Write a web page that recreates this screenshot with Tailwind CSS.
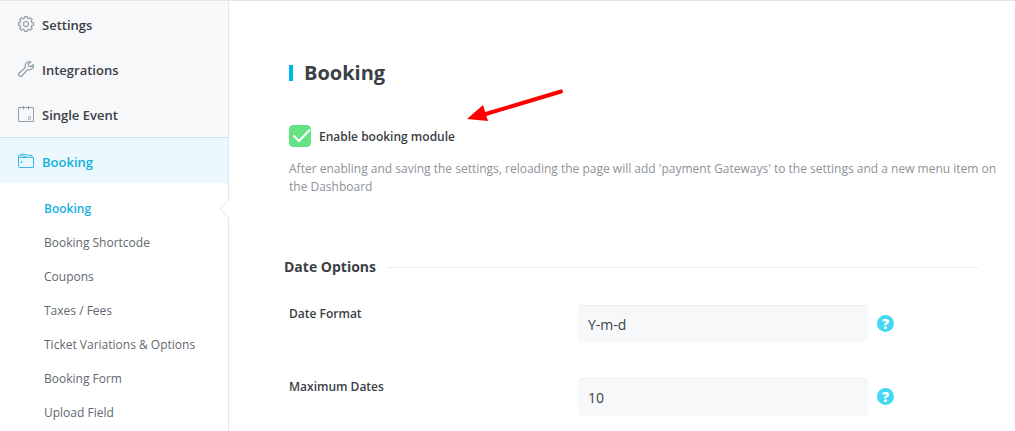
<!DOCTYPE html>
<html lang="en">
<head>
    <meta charset="UTF-8">
    <meta name="viewport" content="width=device-width, initial-scale=1.0">
    <title>Booking Settings</title>
    <script src="https://cdn.jsdelivr.net/npm/@tailwindcss/browser@4"></script>
</head>
<body class="bg-white font-['Open_Sans','Noto_Sans',sans-serif] text-[13px] text-[#3b4046]">
    <div class="flex min-h-screen border-t border-[#e3e5e9]">

        <!-- Sidebar -->
        <nav class="relative w-[229px] shrink-0 border-r border-[#e3e5e9]">
            <div class="bg-[#f7f8fa] leading-5 font-semibold">
                <a href="#" class="flex h-[45px] items-center gap-2 px-[18px] pt-px">
                    <svg class="size-4" viewBox="0 0 16 16" fill="none" stroke="#949eaa" stroke-width="1.200" stroke-linejoin="round">
                        <path d="M6.700.6h2.600l.4 1.700 1.200.5 1.600-1 1.700 1.700-1 1.600.5 1.200 1.700.4v2.600l-1.700.4-.5 1.200 1 1.600-1.700 1.700-1.600-1-1.200.5-.4 1.700H6.700l-.4-1.700-1.200-.5-1.600 1-1.700-1.700 1-1.600-.5-1.200-1.700-.4V6.700l1.700-.4.5-1.200-1-1.600 1.700-1.700 1.600 1 1.200-.5z"/>
                        <circle cx="8" cy="8" r="2.500"/>
                    </svg>
                    <span class="pt-0.5">Settings</span>
                </a>
                <a href="#" class="flex h-[45px] items-center gap-2 px-[18px] pt-px">
                    <svg class="size-4" viewBox="0 0 16 16" fill="none" stroke="#949eaa" stroke-width="1.200" stroke-linejoin="round" stroke-linecap="round">
                        <path d="M12.800.9C10.400.100 7.300 1.600 7.200 4.400c0 .7.100 1.300.300 1.900L1 12.200c-1.300 1.600.9 4.200 2.800 2.800l5.900-6.500c2.900 1 5.900-.8 5.800-3.800l-.2-1.200-2.300 2.200-2.300-.6-.500-2.200z"/>
                    </svg>
                    <span class="pt-0.5">Integrations</span>
                </a>
                <a href="#" class="flex h-[46px] items-center gap-2 px-[18px]">
                    <svg class="size-4" viewBox="0 0 16 16" fill="none" stroke="#949eaa">
                        <path d="M.5 1.500h15v14H.5zM5.500 0v3.500M10.500 0v3.500"/>
                        <path d="M10.500 10.500h2v3h-2z" stroke="#b4bcc4"/>
                    </svg>
                    <span class="pt-0.5">Single Event</span>
                </a>
            </div>
            <a href="#" class="flex h-[46px] items-center gap-2 border-t border-[#c9e9f2] bg-[#ebf9fe] px-[18px] pt-px leading-5 font-semibold text-[#14b1e0]">
                <svg class="size-4" viewBox="0 0 16 16" fill="none" stroke="#3bb8e4" stroke-linejoin="round">
                    <path d="M.5 3v10.500q0 1 1 1h14v-10H2Q.5 4.500.5 3 .8 2 2.500 2M2.500 2.500 3.300 1l10.700 1.700v1.800M2.500 2.500l8 2"/>
                    <path d="M3 8.500h1v1H3z"/>
                </svg>
                <span class="pt-0.5">Booking</span>
            </a>
            <ul class="pt-[9px] pl-11 text-xs text-[#626970]">
                <li><a href="#" class="flex h-[34px] items-center font-semibold text-[#14b1e0]">Booking</a></li>
                <li><a href="#" class="flex h-[34px] items-center">Booking Shortcode</a></li>
                <li><a href="#" class="flex h-[34px] items-center">Coupons</a></li>
                <li><a href="#" class="flex h-[34px] items-center">Taxes / Fees</a></li>
                <li><a href="#" class="flex h-[34px] items-center">Ticket Variations &amp; Options</a></li>
                <li><a href="#" class="flex h-[34px] items-center">Booking Form</a></li>
                <li><a href="#" class="flex h-[34px] items-center">Upload Field</a></li>
            </ul>
            <!-- notch next to the open item -->
            <svg class="absolute top-[199px] -right-px h-[18px] w-[10px]" viewBox="0 0 10 18" fill="#fff" stroke="#e3e5e9">
                <path d="M9.500 0v18" stroke="#fff" stroke-width="2"/>
                <path d="M9 .5 1.500 9 9 17.500"/>
            </svg>
        </nav>

        <!-- Content -->
        <main class="relative flex-1 pt-14 pr-[37px] pl-[60px]">
            <h1 class="flex items-center gap-[11px] text-xl leading-8 font-bold">
                <span class="h-4 w-1 bg-[#00b9eb]"></span>Booking
            </h1>

            <div class="mt-9 flex items-center gap-2">
                <div class="relative size-[22px]">
                    <input type="checkbox" id="enable" checked class="peer block size-[22px] appearance-none rounded border border-[#d5d9de] checked:border-[#64e385] checked:bg-[#64e385]">
                    <svg class="pointer-events-none absolute inset-0 hidden peer-checked:block" viewBox="0 0 22 22" fill="none" stroke="#fff" stroke-width="2">
                        <path d="M4.500 10.500l5.500 5.500L21 4.500"/>
                    </svg>
                </div>
                <label for="enable" class="pt-0.5 text-xs leading-[18px] font-semibold">Enable booking module</label>
            </div>
            <p class="mt-[13px] -mr-6 text-xs leading-[18px] text-[#8d9399]">After enabling and saving the settings, reloading the page will add 'payment Gateways' to the settings and a new menu item on the Dashboard</p>

            <h2 class="mt-[61px] -ml-[5px] flex items-center gap-[11px] text-sm leading-5 font-bold">
                Date Options<span class="h-px flex-1 bg-[#ebedef]"></span>
            </h2>

            <div class="mt-7 flex items-start">
                <label for="format" class="w-[289px] shrink-0 text-xs leading-[18px] font-semibold">Date Format</label>
                <input type="text" id="format" value="Y-m-d" class="h-[38px] w-[290px] rounded-[5px] border-t border-[#e9ebee] bg-[#f7f8fa] px-[10px] text-sm">
                <button type="button" aria-label="Help" class="mt-[10px] ml-[9px] size-[17px] rounded-full bg-[#40d9f1] text-center text-sm leading-[17px] font-extrabold text-white">?</button>
            </div>
            <div class="mt-[35px] flex items-start">
                <label for="maximum" class="w-[289px] shrink-0 text-xs leading-[18px] font-semibold">Maximum Dates</label>
                <input type="text" id="maximum" value="10" class="h-[38px] w-[290px] rounded-[5px] border-t border-[#e9ebee] bg-[#f7f8fa] px-[10px] text-sm">
                <button type="button" aria-label="Help" class="mt-[10px] ml-[9px] size-[17px] rounded-full bg-[#40d9f1] text-center text-sm leading-[17px] font-extrabold text-white">?</button>
            </div>

            <!-- arrow pointing at the checkbox -->
            <svg class="pointer-events-none absolute top-[85px] left-[238px] h-[38px] w-[98px]" viewBox="0 0 98 38" fill="#f00">
                <path d="M17 28.500 94 5.500" stroke="#f00" stroke-width="4" stroke-linecap="round"/>
                <path d="M0 33 16 19l5 16z"/>
            </svg>
        </main>
    </div>
</body>
</html>
